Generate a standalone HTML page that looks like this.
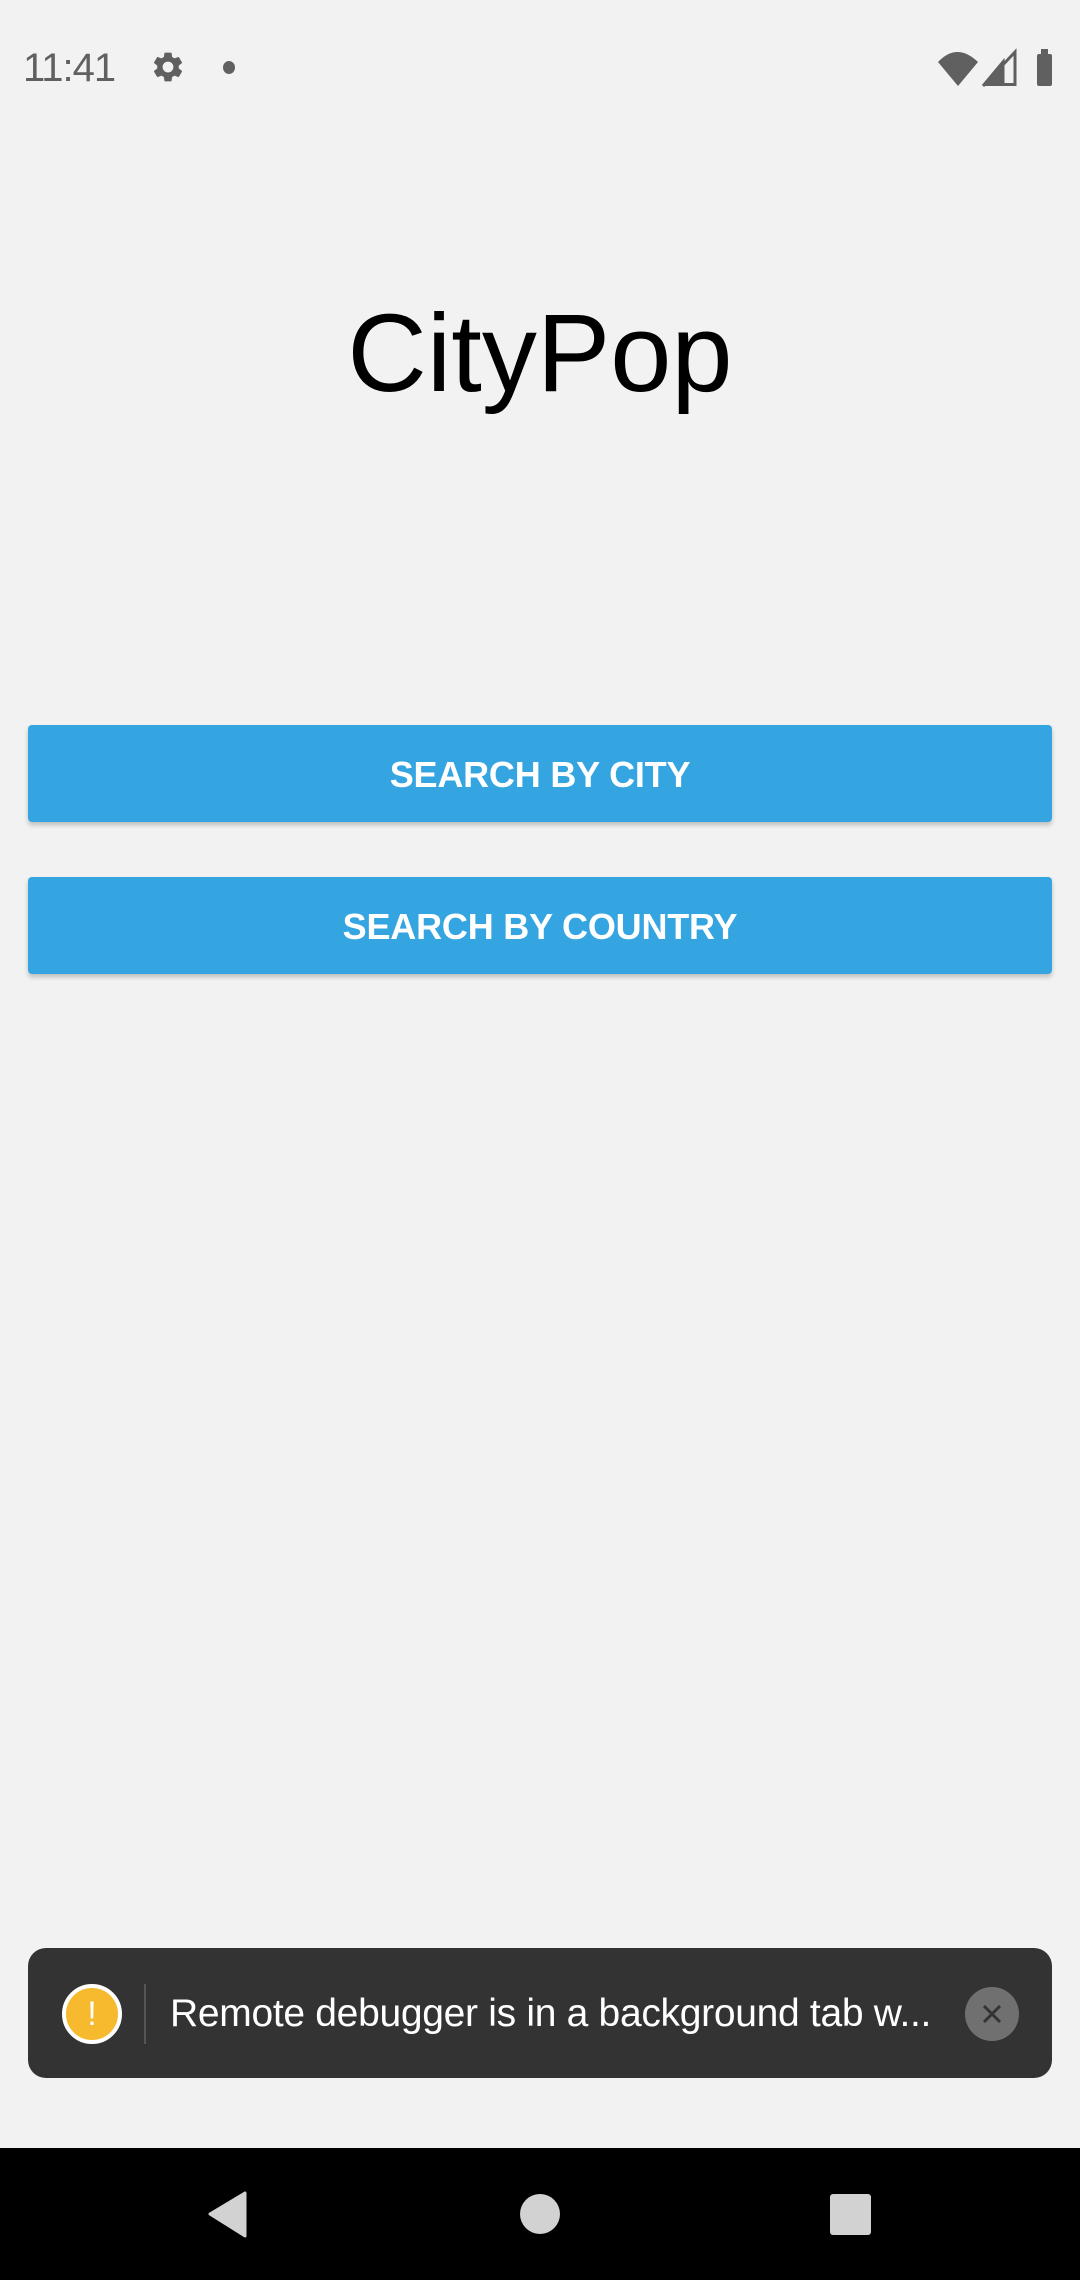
<!DOCTYPE html>
<html><head><meta charset="utf-8"><style>
html,body{margin:0;padding:0;}
body{width:1080px;height:2280px;background:#f2f2f2;position:relative;overflow:hidden;font-family:"Liberation Sans",sans-serif;}
.abs{position:absolute;}
.btn{position:absolute;left:28px;width:1024px;height:97px;background:#35a5e2;border-radius:4px;box-shadow:0 3px 5px rgba(0,0,0,0.22);color:#fff;font-size:36px;font-weight:bold;text-align:center;line-height:100px;letter-spacing:-0.2px;}
</style></head><body>
<div class="abs" style="left:23px;top:46px;font-size:40px;color:#606060;line-height:44px;letter-spacing:-1px;">11:41</div>
<svg class="abs" style="left:150px;top:49px" width="36" height="36" viewBox="0 0 24 24"><path fill="#606060" d="M19.14 12.94c.04-.3.06-.61.06-.94s-.02-.64-.07-.94l2.03-1.58a.49.49 0 0 0 .12-.61l-1.920-3.32a.49.49 0 0 0-.59-.22l-2.39.96c-.5-.38-1.03-.7-1.62-.94l-.36-2.540a.48.48 0 0 0-.48-.41h-3.84a.48.48 0 0 0-.47.41l-.36 2.54c-.59.24-1.130.57-1.62.94l-2.39-.96a.48.48 0 0 0-.59.22L2.74 8.87a.47.47 0 0 0 .12.61l2.03 1.58c-.05.3-.09.63-.09.94s.02.64.07.94l-2.03 1.58a.49.49 0 0 0-.12.61l1.92 3.32c.12.22.37.29.59.22l2.39-.96c.5.38 1.03.7 1.62.94l.36 2.54c.05.24.24.41.48.41h3.84c.24 0 .44-.17.47-.41l.36-2.54c.59-.24 1.13-.56 1.62-.94l2.39.96c.22.08.47 0 .59-.22l1.92-3.32a.47.47 0 0 0-.12-.61l-2.01-1.58zM12 15.6A3.6 3.6 0 1 1 12 8.4a3.6 3.6 0 0 1 0 7.2z"/></svg>
<div class="abs" style="left:223px;top:61px;width:12px;height:13px;border-radius:50%;background:#606060"></div>
<svg class="abs" style="left:936px;top:48px" width="124" height="40" viewBox="0 0 124 40"><path fill="#606060" d="M2 14 Q21 -6 42 14 L22 38 Z"/><path fill="none" stroke="#606060" stroke-width="3" d="M47 38 L79 4 L79 36.5 L67 36.5 L67 14 Z"/><path fill="#606060" d="M47 38 L67 16 L67 38 Z"/><rect x="101" y="6" width="15" height="32" rx="2" fill="#606060"/><rect x="105" y="1" width="7" height="6" fill="#606060"/></svg>
<div class="abs" style="left:0;width:1080px;top:289px;text-align:center;font-size:110px;line-height:130px;color:#000;letter-spacing:0px;">CityPop</div>
<div class="btn" style="top:725px">SEARCH BY CITY</div>
<div class="btn" style="top:877px">SEARCH BY COUNTRY</div>
<div class="abs" style="left:28px;top:1948px;width:1024px;height:130px;background:#333;border-radius:18px;"></div>
<div class="abs" style="left:62px;top:1984px;width:52px;height:52px;border-radius:50%;background:#f7b92d;border:4px solid #fff;color:#fff;font-size:34px;line-height:52px;text-align:center;">!</div>
<div class="abs" style="left:144px;top:1984px;width:2px;height:60px;background:#555"></div>
<div class="abs" style="left:170px;top:1989px;font-size:39px;line-height:50px;color:#fff;white-space:nowrap;letter-spacing:-0.3px;">Remote debugger is in a background tab w...</div>
<div class="abs" style="left:965px;top:1987px;width:54px;height:54px;border-radius:50%;background:#707070;"></div>
<svg class="abs" style="left:965px;top:1987px" width="54" height="54"><path d="M19 19 L35 35 M35 19 L19 35" stroke="#333" stroke-width="3"/></svg>
<div class="abs" style="left:0;top:2148px;width:1080px;height:132px;background:#000"></div>
<svg class="abs" style="left:200px;top:2190px" width="50" height="50"><path d="M45 3 L45 46 L10 24 Z" fill="#d2d2d2" stroke="#d2d2d2" stroke-width="3" stroke-linejoin="round"/></svg>
<div class="abs" style="left:520px;top:2194px;width:40px;height:40px;border-radius:50%;background:#d2d2d2"></div>
<div class="abs" style="left:830px;top:2194px;width:41px;height:41px;border-radius:3px;background:#d2d2d2"></div>
</body></html>
